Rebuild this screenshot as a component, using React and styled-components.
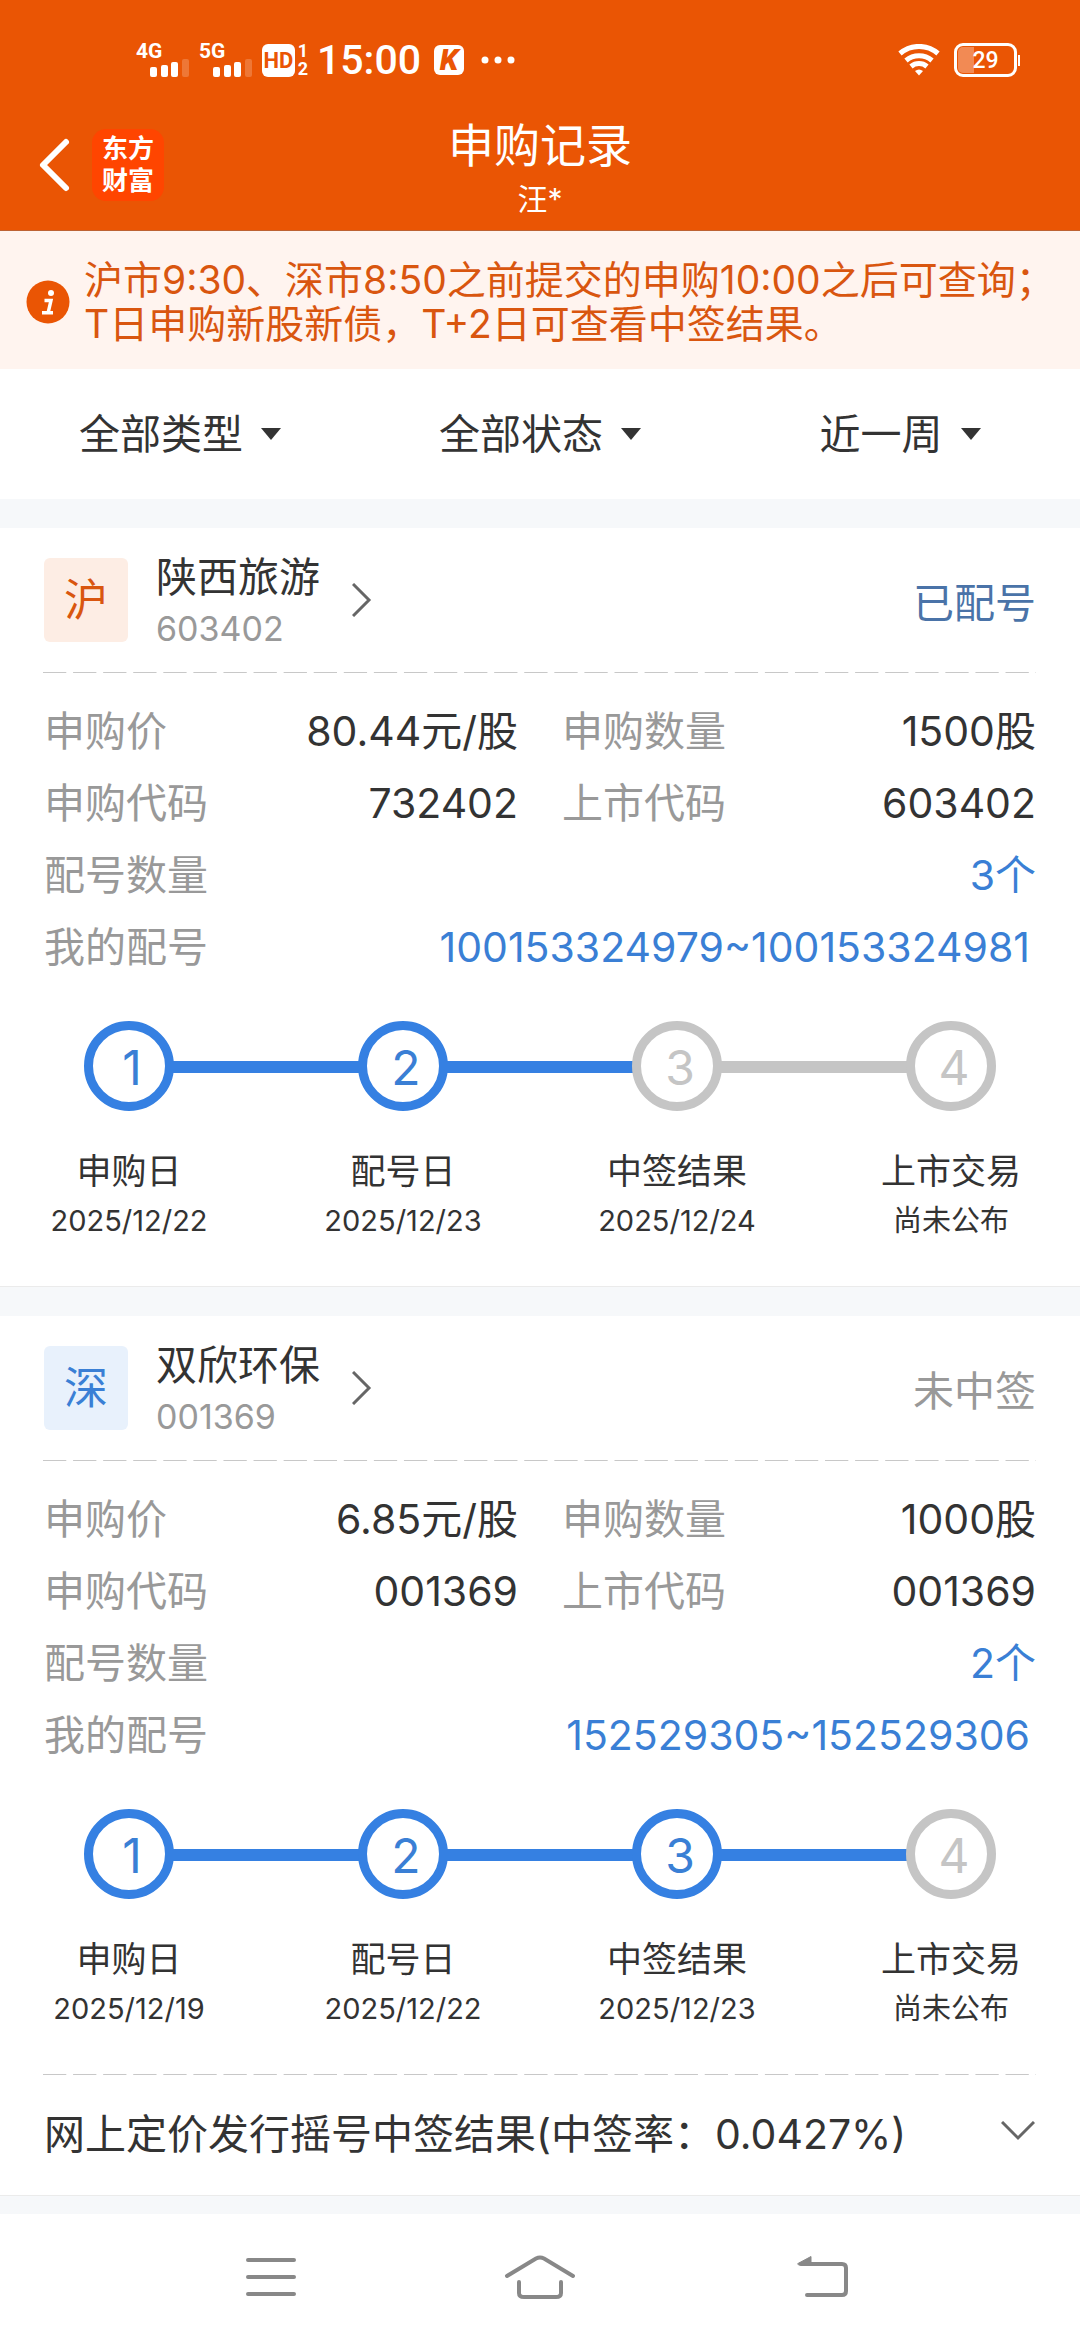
import React from 'react';
import styled, { createGlobalStyle } from 'styled-components';

const GlobalStyle = createGlobalStyle`
  * {
    box-sizing: border-box;
  }

  body {
    margin: 0;
    background: #fff;
    color: #333;
    font-family: Inter, "Noto Sans CJK SC", sans-serif;
    font-size: 41px;
  }

  button, select {
    margin: 0;
    padding: 0;
    border: 0;
    background: none;
    color: inherit;
    font: inherit;
    cursor: pointer;
  }

  a {
    color: inherit;
    text-decoration: none;
  }

  h1, h2, p, dl, dt, dd, ol {
    margin: 0;
    padding: 0;
    font-weight: 400;
    list-style: none;
  }

  svg {
    display: block;
    flex: none;
  }
`;

const Page = styled.div`
  display: flex;
  flex-direction: column;
  min-height: 100vh;
  background: #f6f8fa;
`;

const Header = styled.header`
  background: #ea5504;
  color: #fff;
  border-bottom: 1px solid #bd6233;
`;

const StatusBar = styled.div`
  display: flex;
  align-items: center;
  height: 118px;
  padding: 2px 60px 0 136px;
  font-family: Roboto, sans-serif;
`;

const Signal = styled.div`
  margin-right: 10px;
  font-size: 21px;
  font-weight: 700;
  line-height: 16px;

  svg {
    margin-left: 14px;
  }
`;

const HdBadge = styled.span`
  width: 33px;
  border-radius: 6px;
  background: #fff;
  color: #ea5504;
  font-size: 22px;
  font-weight: 700;
  line-height: 33px;
  text-align: center;
`;

const SimNumbers = styled.span`
  display: flex;
  flex-direction: column;
  width: 16px;
  margin-right: 6px;
  font-size: 18px;
  font-weight: 700;
  line-height: 18px;
  text-align: center;
`;

const Clock = styled.time`
  font-size: 41px;
  font-weight: 500;
  line-height: 40px;
`;

const AppBadge = styled.span`
  width: 30px;
  margin: 0 17px 0 13px;
  border-radius: 6px;
  background: #fff;
  color: #ea5504;
  font-size: 30px;
  font-style: italic;
  font-weight: 900;
  line-height: 30px;
  text-align: center;
`;

const StatusRight = styled.div`
  display: flex;
  align-items: center;
  gap: 14px;
  margin-left: auto;
`;

const Battery = styled.span`
  display: flex;
  align-items: center;

  &::after {
    content: '';
    width: 2px;
    height: 11px;
    margin-left: 1px;
    background: #fff;
  }
`;

const BatteryLevel = styled.span`
  width: 63px;
  height: 34px;
  border: 3px solid #fff;
  border-radius: 9px;
  background: linear-gradient(to right, #f28a54 29%, transparent 29%) content-box;
  padding: 1px;
  font-size: 23px;
  font-weight: 500;
  line-height: 27px;
  text-align: center;
`;

const TitleBar = styled.div`
  display: grid;
  grid-template-columns: 1fr auto 1fr;
  align-items: start;
  height: 112px;
  padding: 0 38px;
`;

const TitleLeft = styled.div`
  display: flex;
  align-items: center;
  gap: 21px;
  padding-top: 11px;
`;

const Logo = styled.a`
  width: 72px;
  height: 72px;
  padding: 4px 0;
  border-radius: 14px;
  background: #ff4500;
  font-size: 26px;
  font-weight: 700;
  line-height: 32px;
  text-align: center;

  span {
    display: block;
  }
`;

const TitleText = styled.div`
  text-align: center;

  h1 {
    font-size: 46px;
    line-height: 54px;
  }

  p {
    font-size: 30px;
    line-height: 54px;
  }
`;

const Notice = styled.div`
  display: flex;
  align-items: center;
  gap: 14px;
  padding: 27px 26px 23px;
  background: #fff4ef;
  color: #d9560f;
  font-size: 39px;
  line-height: 44px;
  white-space: nowrap;
`;

const Filters = styled.form`
  display: flex;
  height: 130px;
  background: #fff;
`;

const Filter = styled.label`
  display: flex;
  flex: 1;
  align-items: center;
  justify-content: center;
  gap: 18px;

  select {
    appearance: none;
    outline: none;
  }
`;

const Card = styled.article`
  margin-top: 29px;
  border-bottom: 1px solid #ebebeb;
  background: #fff;
`;

const CardHead = styled.header`
  display: flex;
  align-items: center;
  height: 144px;
  margin: 0 44px;
`;

const Market = styled.span`
  width: 84px;
  height: 84px;
  margin-right: 28px;
  border-radius: 6px;
  background: ${(props) => (props.$blue ? '#e8f1fc' : '#fdede4')};
  color: ${(props) => (props.$blue ? '#3a7fd5' : '#d9560f')};
  font-size: 44px;
  line-height: 84px;
  text-align: center;
`;

const StockLink = styled.a`
  display: flex;
  align-items: center;
  gap: 32px;
`;

const Stock = styled.div`
  padding-top: 6px;

  h2 {
    font-size: 41px;
    line-height: 52px;
  }

  p {
    color: #999;
    font-size: 34px;
    line-height: 52px;
  }
`;

const State = styled.span`
  margin-left: auto;
  color: ${(props) => (props.$active ? '#4a73a8' : '#999')};
`;

const Dashes = styled.hr`
  height: 1px;
  margin: 0 44px 0 43px;
  border: 0;
  background: linear-gradient(to right, #c8c8c8 77%, transparent 77%) 0 0 / 30px 1px round;
`;

const Details = styled.dl`
  display: grid;
  grid-template-columns: 1fr 1fr;
  column-gap: 44px;
  padding: 22px 44px 0;
`;

const Detail = styled.div`
  display: flex;
  justify-content: space-between;
  grid-column: ${(props) => (props.$wide ? '1 / -1' : 'auto')};
  line-height: 72px;
  white-space: nowrap;

  dt {
    color: #999;
  }

  dd {
    color: ${(props) => (props.$wide ? '#3a7fd5' : '#333')};
  }
`;

const Numbers = styled.a`
  padding-right: 6px;
`;

const Track = styled.div`
  display: flex;
  align-items: center;
  margin-top: 38px;
  padding: 0 84px;
`;

const Circle = styled.span`
  width: 90px;
  height: 90px;
  padding: 2px 0 0 6px;
  border: 9px solid ${(props) => (props.$done ? '#3580e2' : '#c5c5c5')};
  border-radius: 50%;
  color: ${(props) => (props.$done ? '#3a7fd5' : '#c5c5c5')};
  font-size: 48px;
  font-weight: 400;
  line-height: 72px;
  text-align: center;
`;

const Line = styled.span`
  flex: 1;
  height: 12px;
  margin: 2px -2px 0;
  background: ${(props) => (props.$done ? '#3580e2' : '#c5c5c5')};
`;

const StepLabels = styled.ol`
  display: flex;
  justify-content: space-between;
  padding: 35px 44px 40px;
`;

const StepLabel = styled.li`
  width: 170px;
  font-size: 29px;
  line-height: 50px;
  text-align: center;
  white-space: nowrap;

  p {
    font-size: 35px;
  }
`;

const ResultButton = styled.button`
  display: flex;
  align-items: center;
  justify-content: space-between;
  width: 100%;
  height: 120px;
  padding: 0 45px 8px 44px;
  white-space: nowrap;
`;

const NavBar = styled.nav`
  display: flex;
  justify-content: space-between;
  height: 126px;
  margin-top: auto;
  padding: 0 226px;
  background: #fff;

  button {
    display: flex;
    align-items: center;
    justify-content: center;
    width: 90px;
  }
`;

const records = [
  {
    market: '沪',
    blue: false,
    name: '陕西旅游',
    code: '603402',
    state: '已配号',
    price: '80.44元/股',
    amount: '1500股',
    applyCode: '732402',
    count: '3个',
    numbers: '100153324979~100153324981',
    done: 2,
    dates: ['2025/12/22', '2025/12/23', '2025/12/24', '尚未公布'],
  },
  {
    market: '深',
    blue: true,
    name: '双欣环保',
    code: '001369',
    state: '未中签',
    price: '6.85元/股',
    amount: '1000股',
    applyCode: '001369',
    count: '2个',
    numbers: '152529305~152529306',
    done: 3,
    dates: ['2025/12/19', '2025/12/22', '2025/12/23', '尚未公布'],
    result: '网上定价发行摇号中签结果(中签率：0.0427%)',
  },
];

const stepNames = ['申购日', '配号日', '中签结果', '上市交易'];
const filters = ['全部类型', '全部状态', '近一周'];

function SignalBars({ label }) {
  return (
    <Signal>
      {label}
      <svg width="39" height="18" viewBox="0 0 39 18" fill="#fff">
        <rect x="0" y="8" width="7" height="10" rx="2" />
        <rect x="11" y="6" width="7" height="12" rx="2" />
        <rect x="21" y="3" width="7" height="15" rx="2" />
        <rect x="32" y="0" width="7" height="18" rx="2" opacity="0.2" />
      </svg>
    </Signal>
  );
}

function Record({ record }) {
  return (
    <Card>
      <CardHead>
        <Market $blue={record.blue}>{record.market}</Market>
        <StockLink href={`#${record.code}`}>
          <Stock>
            <h2>{record.name}</h2>
            <p>{record.code}</p>
          </Stock>
          <svg width="20" height="34" viewBox="0 0 20 34" fill="none" stroke="#666" strokeWidth="3">
            <path d="M1 1 L17 17 L1 33" />
          </svg>
        </StockLink>
        <State $active={record.done < 3}>{record.state}</State>
      </CardHead>
      <Dashes />
      <Details>
        <Detail><dt>申购价</dt><dd>{record.price}</dd></Detail>
        <Detail><dt>申购数量</dt><dd>{record.amount}</dd></Detail>
        <Detail><dt>申购代码</dt><dd>{record.applyCode}</dd></Detail>
        <Detail><dt>上市代码</dt><dd>{record.code}</dd></Detail>
        <Detail $wide><dt>配号数量</dt><dd>{record.count}</dd></Detail>
        <Detail $wide>
          <dt>我的配号</dt>
          <dd><Numbers href="#numbers">{record.numbers}</Numbers></dd>
        </Detail>
      </Details>
      <Track>
        {stepNames.map((name, i) => (
          <React.Fragment key={name}>
            {i > 0 && <Line $done={i <= record.done} />}
            <Circle $done={i < record.done}>{i + 1}</Circle>
          </React.Fragment>
        ))}
      </Track>
      <StepLabels>
        {stepNames.map((name, i) => (
          <StepLabel key={name}>
            <p>{name}</p>
            {record.dates[i]}
          </StepLabel>
        ))}
      </StepLabels>
      {record.result && (
        <>
          <Dashes />
          <ResultButton type="button">
            {record.result}
            <svg width="34" height="20" viewBox="0 0 34 20" fill="none" stroke="#666" strokeWidth="3">
              <path d="M1 1 L17 17 L33 1" />
            </svg>
          </ResultButton>
        </>
      )}
    </Card>
  );
}

function App() {
  return (
    <Page>
      <GlobalStyle />
      <Header>
        <StatusBar>
          <SignalBars label="4G" />
          <SignalBars label="5G" />
          <HdBadge>HD</HdBadge>
          <SimNumbers>
            <span>1</span>
            <span>2</span>
          </SimNumbers>
          <Clock>15:00</Clock>
          <AppBadge>K</AppBadge>
          <svg width="34" height="8" viewBox="0 0 34 8" fill="#fff">
            <circle cx="4" cy="4" r="3.5" />
            <circle cx="17" cy="4" r="3.5" />
            <circle cx="30" cy="4" r="3.5" />
          </svg>
          <StatusRight>
            <svg width="42" height="32" viewBox="0 0 42 32" fill="none" stroke="#fff" strokeWidth="5">
              <path d="M2 9.5 A29 29 0 0 1 40 9.5" />
              <path d="M8 16.5 A20 20 0 0 1 34 16.5" />
              <path d="M13 22.5 A12.5 12.5 0 0 1 29 22.5" />
              <path d="M17 27 Q21 24 25 27 L21 31.5 Z" fill="#fff" stroke="none" />
            </svg>
            <Battery>
              <BatteryLevel>29</BatteryLevel>
            </Battery>
          </StatusRight>
        </StatusBar>
        <TitleBar>
          <TitleLeft>
            <button type="button" aria-label="返回">
              <svg width="33" height="56" viewBox="0 0 33 56" fill="none" stroke="#fff" strokeWidth="6" strokeLinecap="round" strokeLinejoin="round">
                <path d="M28 5 L5 28 L28 51" />
              </svg>
            </button>
            <Logo href="#home">
              <span>东方</span>
              <span>财富</span>
            </Logo>
          </TitleLeft>
          <TitleText>
            <h1>申购记录</h1>
            <p>汪*</p>
          </TitleText>
        </TitleBar>
      </Header>
      <Notice>
        <svg width="44" height="44" viewBox="0 0 44 44">
          <circle cx="22" cy="22" r="21.5" fill="#ea5504" />
          <circle cx="25" cy="13" r="3" fill="#fff" />
          <path d="M18.5 20.5 H25 L22.2 32.5 M16 32.8 H27" fill="none" stroke="#fff" strokeWidth="3.4" />
        </svg>
        <p>
          沪市9:30、深市8:50之前提交的申购10:00之后可查询；
          <br />
          T日申购新股新债，T+2日可查看中签结果。
        </p>
      </Notice>
      <Filters>
        {filters.map((name) => (
          <Filter key={name}>
            <select aria-label={name}>
              <option>{name}</option>
            </select>
            <svg width="20" height="12" viewBox="0 0 20 12" fill="#333">
              <path d="M0 0 H20 L10 12 Z" />
            </svg>
          </Filter>
        ))}
      </Filters>
      {records.map((record) => (
        <Record key={record.code} record={record} />
      ))}
      <NavBar>
        <button type="button" aria-label="最近任务">
          <svg width="50" height="40" viewBox="0 0 50 40" stroke="#888" strokeWidth="4" strokeLinecap="round">
            <path d="M2 3 H48 M2 20 H48 M2 37 H48" />
          </svg>
        </button>
        <button type="button" aria-label="主屏幕">
          <svg width="72" height="44" viewBox="0 0 72 44" fill="none" stroke="#888" strokeWidth="4" strokeLinecap="round">
            <path d="M3 21 L32 3.5 Q36 1.5 40 3.5 L69 21" />
            <path d="M15 27 V38 Q15 42 20 42 H52 Q57 42 57 38 V27" />
          </svg>
        </button>
        <button type="button" aria-label="返回上级">
          <svg width="80" height="44" viewBox="-28 0 80 44" fill="none" stroke="#888" strokeWidth="4" strokeLinecap="round">
            <path d="M4 9 H45 Q49 9 49 13 V36 Q49 40 45 40 H10" />
            <path d="M1 8.5 L14 1.5 V10 H2 Z" fill="#888" strokeWidth="1" />
          </svg>
        </button>
      </NavBar>
    </Page>
  );
}

export default App;
